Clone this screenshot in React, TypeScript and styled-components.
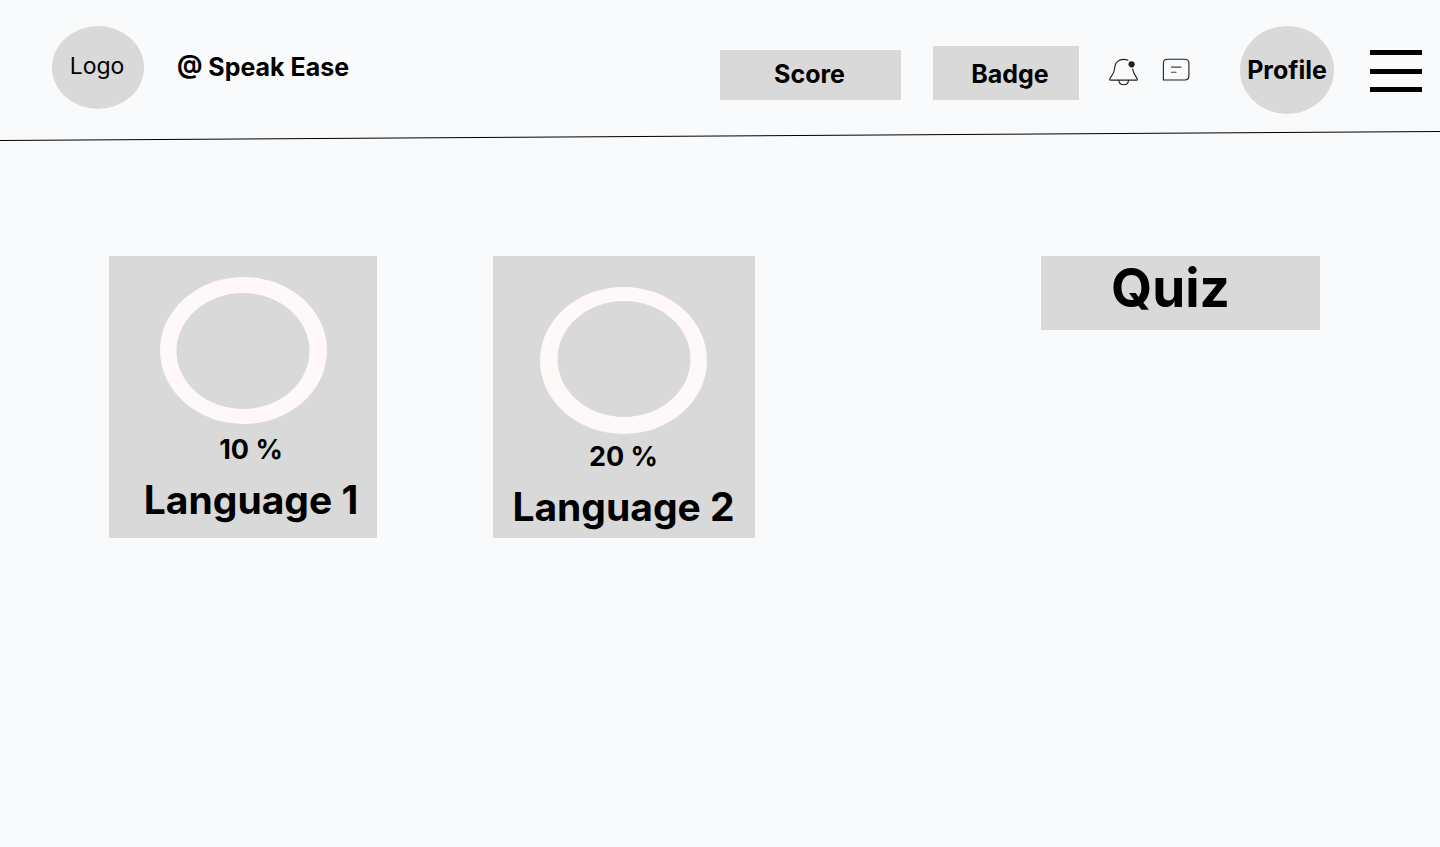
import React from "react";
import styled, { createGlobalStyle } from "styled-components";

const GlobalStyle = createGlobalStyle`
  *, *::before, *::after { box-sizing: border-box; }
  body {
    margin: 0;
    background: #f8fafc;
    color: #000;
    font-family: Inter, "Liberation Sans", sans-serif;
  }
  button { font: inherit; color: inherit; border: 0; padding: 0; cursor: pointer; }
`;

const Header = styled.header`
  display: flex;
  flex-wrap: wrap;
  align-items: flex-start;
  justify-content: space-between;
  gap: 16px;
  padding: 26px 18px 17px 52px;
`;

const Brand = styled.a`
  display: flex;
  align-items: center;
  gap: 33px;
  color: inherit;
  text-decoration: none;
`;

const Logo = styled.span`
  display: flex;
  align-items: center;
  justify-content: center;
  width: 92px;
  height: 83px;
  padding: 0 2px 4px 0;
  border-radius: 50%;
  background: #d9d9d9;
  font-size: 23px;
  font-weight: 400;
`;

const BrandName = styled.span`
  padding-bottom: 1px;
  font-size: 25px;
  font-weight: 700;
`;

const Actions = styled.nav`
  display: flex;
  flex-wrap: wrap;
  align-items: center;
  gap: 36px;
`;

const Tools = styled.div`
  display: flex;
  align-items: center;
  gap: 50px;
`;

const Stats = styled.div`
  display: flex;
  align-items: flex-end;
  gap: 32px;
  padding-top: 6px;
`;

const StatButton = styled.button<{ $width: number; $height: number; $padding: string }>`
  width: ${(p) => p.$width}px;
  height: ${(p) => p.$height}px;
  padding: ${(p) => p.$padding};
  background: #d9d9d9;
  font-size: 25px;
  font-weight: 700;
`;

const Shortcuts = styled.div`
  display: flex;
  align-items: center;
  gap: 30px;
`;

const IconPair = styled.div`
  display: flex;
  align-items: flex-start;
  gap: 23px;
  padding-top: 4px;
`;

const IconButton = styled.button`
  display: flex;
  background: none;

  svg { display: block; }
`;

const MenuButton = styled(IconButton)`
  padding-top: 2px;
`;

const ProfileButton = styled.button`
  width: 94px;
  height: 88px;
  border-radius: 50%;
  background: #d9d9d9;
  font-size: 25px;
  font-weight: 700;
`;

const Divider = styled.svg`
  display: block;
  width: 100%;
  height: 10px;
`;

const Main = styled.main`
  display: flex;
  flex-wrap: wrap;
  align-items: flex-start;
  justify-content: space-between;
  gap: 40px;
  padding: 115px 120px 40px 109px;
`;

const Courses = styled.section`
  display: flex;
  flex-wrap: wrap;
  gap: 40px 116px;
`;

const Card = styled.article<{ $width: number; $padding: string }>`
  display: flex;
  flex-direction: column;
  align-items: center;
  width: ${(p) => p.$width}px;
  min-height: 282px;
  padding: ${(p) => p.$padding};
  background: #d9d9d9;
`;

const Caption = styled.div<{ $gap: number; $indent: number }>`
  display: flex;
  flex-direction: column;
  align-items: center;
  gap: 9px;
  padding: ${(p) => p.$gap}px 0 0 ${(p) => p.$indent}px;
  white-space: nowrap;
`;

const Percent = styled.p`
  margin: 0;
  font-size: 27px;
  line-height: 34px;
  font-weight: 700;
`;

const Language = styled.h2`
  margin: 0;
  font-size: 39px;
  line-height: 48px;
  font-weight: 700;
`;

const QuizButton = styled.button`
  display: flex;
  justify-content: center;
  width: 279px;
  height: 74px;
  padding-right: 20px;
  background: #d9d9d9;
  font-size: 53px;
  line-height: 64px;
  font-weight: 700;
`;

type RingProps = { label: string; cx: number; cy: number };

function Ring({ label, cx, cy }: RingProps) {
  return (
    <svg width="167" height="147" viewBox="0 0 167 147" role="img" aria-label={label}>
      <ellipse cx="83.5" cy="73.5" rx="83.5" ry="73.5" fill="#fff8f8" />
      <ellipse cx={cx} cy={cy} rx="66.5" ry="58" fill="#d9d9d9" />
    </svg>
  );
}

const courses = [
  { name: "Language 1", percent: 10, width: 268, padding: "21px 0 0", gap: 9, indent: 16, cx: 83, cy: 74 },
  { name: "Language 2", percent: 20, width: 262, padding: "31px 1px 0 0", gap: 6, indent: 0, cx: 84, cy: 72 },
];

export default function App() {
  return (
    <>
      <GlobalStyle />
      <Header>
        <Brand href="#">
          <Logo>Logo</Logo>
          <BrandName>@ Speak Ease</BrandName>
        </Brand>
        <Actions>
          <Shortcuts>
            <Stats>
              <StatButton $width={181} $height={50} $padding="0 2px 2px 0">Score</StatButton>
              <StatButton $width={146} $height={54} $padding="2px 0 0 8px">Badge</StatButton>
            </Stats>
            <Tools>
              <IconPair>
                <IconButton aria-label="Notifications">
                  <svg width="30" height="28" viewBox="0 0 30 28" fill="none" stroke="#1f1f1f" strokeWidth="1.1" strokeLinecap="round">
                    <path d="M19 2.3C17.8 1.7 16.4 1.4 14.8 1.4C9.4 1.4 6 4.7 5.8 9.2C5.6 13.2 4.9 15 2.5 18.1C1.3 19.7.6 20.8.6 21.4C.6 21.9 1 22.1 1.7 22.1H27.3C28.1 22.1 28.4 21.8 28.4 21.4C28.4 20.8 27.8 19.8 26.6 18.1C24.7 15.4 24 13.4 23.7 10.7" />
                    <path d="M9.8 22.3C10.2 25 12 26.7 14.6 26.7C17.2 26.7 19.2 25 19.6 22.3" />
                    <circle cx="22.6" cy="6.3" r="3.1" fill="#1f1f1f" stroke="none" />
                  </svg>
                </IconButton>
                <IconButton aria-label="Messages">
                  <svg width="28" height="24" viewBox="0 0 28 24" fill="none" stroke="#1f1f1f" strokeWidth="1.1" strokeLinecap="round" strokeLinejoin="round">
                    <path d="M1.4 22V5.2C1.4 2.4 2.8 1.2 5.4 1.2H22.6C25.4 1.2 26.9 2.6 26.9 5.2V18C26.9 20.6 25.4 22 22.6 22Z" />
                    <path d="M9.4 9.1H19M9.4 14.2H14" stroke="#444" />
                  </svg>
                </IconButton>
              </IconPair>
              <ProfileButton>Profile</ProfileButton>
            </Tools>
          </Shortcuts>
          <MenuButton aria-label="Menu">
            <svg width="52" height="42" viewBox="0 0 52 42">
              <path d="M0 0H52V5H0ZM0 19H52V24H0ZM0 37H52V42H0Z" />
            </svg>
          </MenuButton>
        </Actions>
      </Header>
      <Divider viewBox="0 0 1440 10" preserveAspectRatio="none" aria-hidden="true">
        <line x1="0" y1="9.5" x2="1440" y2="0.5" stroke="#000" />
      </Divider>
      <Main>
        <Courses>
          {courses.map((c) => (
            <Card key={c.name} $width={c.width} $padding={c.padding}>
              <Ring label={`${c.name} progress`} cx={c.cx} cy={c.cy} />
              <Caption $gap={c.gap} $indent={c.indent}>
                <Percent>{`${c.percent} %`}</Percent>
                <Language>{c.name}</Language>
              </Caption>
            </Card>
          ))}
        </Courses>
        <QuizButton>Quiz</QuizButton>
      </Main>
    </>
  );
}
